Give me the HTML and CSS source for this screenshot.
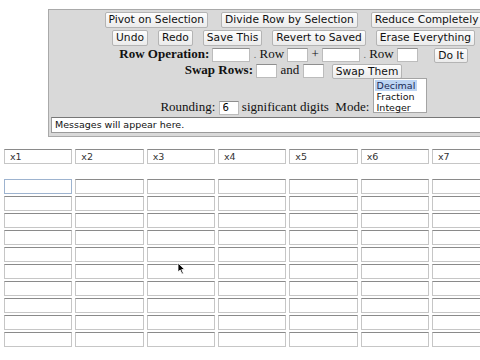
FILE: index.html
```html
<!DOCTYPE html>
<html lang="en">
<head>
    <meta charset="UTF-8">
    <title>Row Reducer</title>
    <link rel="stylesheet" href="styles.css">
</head>
<body>
  <div class="panel">
    <div class="bar top">
      <button class="btn">Pivot on Selection</button>
      <button class="btn">Divide Row by Selection</button>
      <button class="btn">Reduce Completely</button>
    </div>
    <div class="bar">
      <button class="btn">Undo</button>
      <button class="btn">Redo</button>
      <button class="btn">Save This</button>
      <button class="btn">Revert to Saved</button>
      <button class="btn">Erase Everything</button>
    </div>
    <div class="line">
      <b>Row Operation:</b> <input class="box wide"> <span class="dot">.</span> Row <input class="box"> + <input class="box wide"> <span class="dot">.</span> Row <input class="box"> <button class="btn small doit">Do It</button>
    </div>
    <div class="line">
      <b>Swap Rows:</b> <input class="box"> and <input class="box"> <button class="btn small swap">Swap Them</button>
    </div>
    <div class="line round">
      Rounding: <input class="box digits" value="6"> significant digits &nbsp;Mode: <div class="listbox">
        <div class="opt picked">Decimal</div>
        <div class="opt">Fraction</div>
        <div class="opt">Integer</div>
      </div>
    </div>
    <div class="msg">Messages will appear here.</div>
  </div>

  <div class="matrix">
    <div class="hdr" id="hdr"></div>
    <div class="rows" id="rows"></div>
  </div>

  <svg class="pointer" width="9" height="13" viewBox="0 0 9 13">
    <path d="M1 1 L1 10 L3.2 8 L5 12 L6.4 11.4 L4.7 7.6 L7.6 7.4 Z" fill="#000" stroke="#fff" stroke-width="0.8"/>
  </svg>

  <script>
    // kolom x1..x8, baris kosong 10
    const cols = 8;
    const hdr = document.getElementById('hdr');
    const rows = document.getElementById('rows');

    for (let c = 1; c <= cols; c++) {
      const inp = document.createElement('input');
      inp.className = 'cell';
      inp.value = 'x' + c;
      hdr.appendChild(inp);
    }

    for (let r = 0; r < 10; r++) {
      for (let c = 0; c < cols; c++) {
        const inp = document.createElement('input');
        inp.className = (r === 0 && c === 0) ? 'cell active' : 'cell';
        rows.appendChild(inp);
      }
    }
  </script>
</body>
</html>
```

FILE: styles.css
```css
* { box-sizing: border-box; }
html, body { margin: 0; overflow: hidden; }
body { font-family: "Liberation Serif", serif; font-size: 13px; color: #111; width: 620px; position: relative; height: 360px; }

.panel {
    margin: 9px 0 0 48px;
    width: 491px;
    background: #d9d9d9;
    border: 1px solid #a9a9a9;
    padding: 2px 1px 3px 1px;
}

.bar { display: flex; justify-content: center; gap: 10px; height: 16px; margin-bottom: 2px; }
.bar.top { gap: 13px; }
.bar + .line { margin-top: -2px; }

.btn {
    font-family: "DejaVu Sans", sans-serif;
    font-size: 10.7px;
    height: 16px;
    line-height: 14px;
    padding: 0 3px;
    border: 1px solid #b4b4b4;
    border-radius: 2px;
    background: linear-gradient(#fdfdfd, #ebebeb);
    color: #111;
}
.btn.small { height: 15px; vertical-align: middle; }
.doit { margin-left: 13px; }
.swap { margin-left: 5px; }

.line { text-align: center; height: 16px; line-height: 16px; white-space: nowrap; }
.dot { color: #666; font-size: 10px; }

.box {
    width: 21px;
    height: 14px;
    border: 1px solid #bcbcbc;
    border-top-color: #8e8e8e;
    background: #fff;
    vertical-align: middle;
    padding: 0 3px;
    font: 10px "DejaVu Sans", sans-serif;
}
.box.wide { width: 38px; }
.box.digits { width: 20px; vertical-align: baseline; }

.line.round { height: 35px; line-height: 14px; margin-top: 0; }
.listbox {
    display: inline-block;
    width: 54px;
    height: 35px;
    background: #fff;
    border: 1px solid #a4a4a4;
    padding: 1px 9px 0 1px;
    text-align: left;
    font: 9.5px "DejaVu Sans", sans-serif;
    line-height: 11px;
}
.opt { height: 11px; padding-left: 2px; }
.opt.picked { background: #bcd4f2; color: #1a2a55; }

.msg {
    height: 16px;
    margin: 4px 0 0 1px;
    background: #fff;
    border: 1px solid #9a9a9a;
    border-top-color: #777;
    padding: 0 3px;
    font: 9.5px "DejaVu Sans", sans-serif;
    line-height: 14px;
    color: #111;
}

.matrix { margin: 12px 0 0 4px; }
.hdr, .rows { display: grid; grid-template-columns: repeat(8, 68.33px); column-gap: 3px; }
.rows { margin-top: 15px; row-gap: 2px; }

.cell {
    height: 15px;
    border: 1px solid #c6c6c6;
    border-top-color: #8a8a8a;
    background: #fff;
    padding: 0 5px;
    font: 9.5px "DejaVu Sans", sans-serif;
    color: #333;
}
.cell.active { border-color: #9db3cf; }

.pointer { position: absolute; left: 177px; top: 262px; }
```
